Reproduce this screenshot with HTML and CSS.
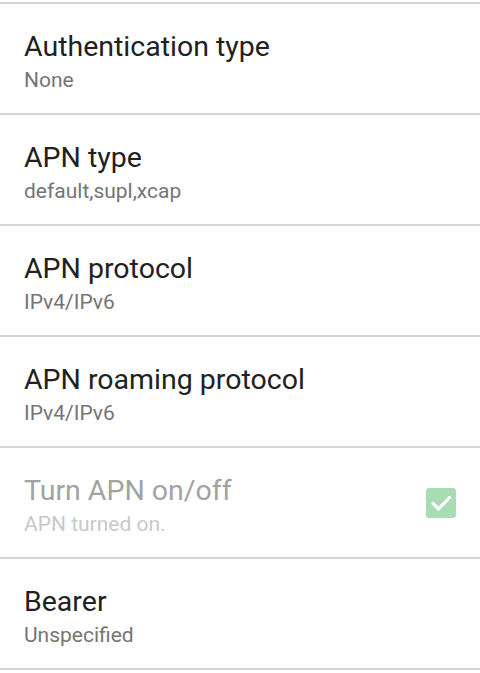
FILE: index.html
```html
<!DOCTYPE html>
<html>
<head>
<meta charset="utf-8">
<link rel="stylesheet" href="styles.css">
</head>
<body>
<ul class="list">
  <li class="item"><div class="text"><div class="title">Authentication type</div><div class="summary">None</div></div></li>
  <li class="item"><div class="text"><div class="title">APN type</div><div class="summary">default,supl,xcap</div></div></li>
  <li class="item"><div class="text"><div class="title">APN protocol</div><div class="summary">IPv4/IPv6</div></div></li>
  <li class="item"><div class="text"><div class="title">APN roaming protocol</div><div class="summary">IPv4/IPv6</div></div></li>
  <li class="item disabled"><div class="text"><div class="title">Turn APN on/off</div><div class="summary">APN turned on.</div></div>
    <div class="checkbox"><svg width="30" height="30" viewBox="0 0 30 30"><path d="M7 15.5 L12.5 21 L23.5 9.5" fill="none" stroke="#fff" stroke-width="3.2" stroke-linecap="round" stroke-linejoin="round"/></svg></div></li>
  <li class="item"><div class="text"><div class="title">Bearer</div><div class="summary">Unspecified</div></div></li>
</ul>
</body>
</html>
```
FILE: styles.css
```css
html, body { margin: 0; padding: 0; background: #fff; }
body { font-family: Roboto, "Noto Sans", sans-serif; width: 480px; height: 673px; overflow: hidden; }
.list { list-style: none; margin: 0; padding: 0; border-top: 2px solid #d6d6d6; margin-top: 2px; }
.item { height: 109px; border-bottom: 2px solid #d6d6d6; display: flex; align-items: center; padding: 0 24px; box-sizing: content-box; }
.text { flex: 1; display: flex; flex-direction: column; padding-top: 5px; }
.title { font-size: 28.5px; color: #212121; line-height: 36px; }
.summary { font-size: 21px; color: #757575; line-height: 26px; margin-top: 1.5px; }
.disabled .title { color: #a3a3a3; }
.disabled .summary { color: #c9c9c9; }
.checkbox { width: 30px; height: 30px; background: #a8dcb2; border-radius: 3px; }
.checkbox svg { display: block; }
```
